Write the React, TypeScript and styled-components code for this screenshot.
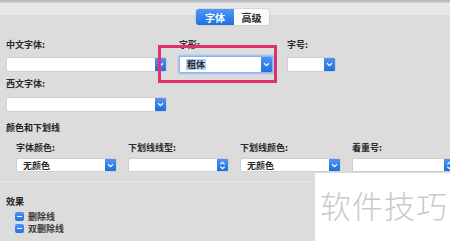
import React from "react";
import styled, { createGlobalStyle } from "styled-components";

const GlobalStyle = createGlobalStyle`
  html, body {
    margin: 0;
    padding: 0;
    background: #dcdcdc;
  }
  body {
    font-family: "Noto Sans CJK SC", "Noto Sans", sans-serif;
    color: #262626;
  }
`;

const Panel = styled.div`
  position: relative;
  width: 450px;
  height: 241px;
  overflow: hidden;
  background: #dcdcdc;
`;

const Header = styled.div`
  height: 26px;
  box-sizing: border-box;
  padding: 9px 0 0 196px;
  background: linear-gradient(
    to bottom,
    #b8b8b8 0px,
    #c4c4c4 2px,
    #e8e8e8 3px,
    #e8e8e8 15px,
    #d2d2d2 16px,
    #dcdcdc 17px
  );
`;

const Tabs = styled.div`
  display: flex;
  height: 16px;
  border-radius: 3px;
  overflow: hidden;
  box-shadow: 0 0 0 0.5px #c4c4c4;
  width: max-content;
`;

const Tab = styled.div<{ $active?: boolean }>`
  width: ${(p) => (p.$active ? 38 : 35)}px;
  height: 16px;
  display: flex;
  align-items: center;
  justify-content: center;
  font-size: 10px;
  font-weight: 700;
  color: ${(p) => (p.$active ? "#fff" : "#2a2a2a")};
  background: ${(p) =>
    p.$active ? "linear-gradient(to bottom, #4f97f4, #2170e4)" : "#fafafa"};
`;

const FontRow = styled.div`
  display: flex;
  padding: 13px 0 0 6px;
`;

const Column = styled.div<{ $left?: number }>`
  display: flex;
  flex-direction: column;
  margin-left: ${(p) => p.$left ?? 0}px;
`;

const Label = styled.div<{ $top?: number }>`
  font-size: 9px;
  line-height: 12px;
  font-weight: 700;
  color: #2a2a2a;
  margin-top: ${(p) => p.$top ?? 0}px;
  white-space: nowrap;
`;

const SelectBox = styled.div<{ $w: number; $h?: number; $top?: number; $focus?: boolean }>`
  display: flex;
  width: ${(p) => p.$w}px;
  height: ${(p) => p.$h ?? 15}px;
  margin-top: ${(p) => p.$top ?? 0}px;
  box-sizing: border-box;
  background: #fff;
  border-radius: 2px;
  border: 1px solid ${(p) => (p.$focus ? "#8db3ea" : "#cfcfcf")};
  box-shadow: ${(p) => (p.$focus ? "0 0 0 1.5px #a9c6f0" : "none")};
  overflow: hidden;
  flex-shrink: 0;
`;

const SelectValue = styled.div`
  flex: 1;
  display: flex;
  align-items: center;
  padding-left: 6px;
  font-size: 9px;
  font-weight: 700;
  color: #2a2a2a;
  white-space: nowrap;
`;

const Highlight = styled.span`
  background: #b6cff2;
  padding: 0 1px;
  line-height: 11px;
`;

const Arrow = styled.div`
  width: 11px;
  display: flex;
  align-items: center;
  justify-content: center;
  background: linear-gradient(to bottom, #4d95f3, #1f6de0);
`;

const SectionTitle = styled.div<{ $top: number }>`
  font-size: 9px;
  line-height: 12px;
  font-weight: 700;
  color: #222;
  margin: ${(p) => p.$top}px 0 0 6px;
`;

const ColorRow = styled.div`
  display: grid;
  grid-template-columns: repeat(4, 101px);
  column-gap: 11px;
  padding: 8px 0 0 16px;
`;

const Separator = styled.div`
  height: 1px;
  margin-top: 8px;
  background: #ebebeb;
  border-top: 1px solid #d2d2d2;
`;

const CheckRow = styled.div<{ $top: number }>`
  display: flex;
  align-items: center;
  gap: 4px;
  height: 11px;
  margin: ${(p) => p.$top}px 0 0 15px;
  font-size: 9px;
  font-weight: 700;
  color: #3a3a3a;
`;

const Check = styled.div`
  width: 9px;
  height: 9px;
  border-radius: 2px;
  background: linear-gradient(to bottom, #4d95f3, #2170e4);
  display: flex;
  align-items: center;
  justify-content: center;
  &::after {
    content: "";
    width: 5px;
    height: 1.5px;
    background: #fff;
  }
`;

const Annotation = styled.div`
  position: absolute;
  left: 158px;
  top: 45px;
  width: 119px;
  height: 38px;
  box-sizing: border-box;
  border: 3px solid #de3170;
`;

const Watermark = styled.div`
  position: absolute;
  left: 315px;
  top: 173px;
  right: 0;
  bottom: 0;
  background: #fff;
  display: flex;
  align-items: center;
  padding-left: 5px;
  padding-bottom: 6px;
  font-size: 31px;
  font-weight: 300;
  letter-spacing: 1px;
  color: #cacaca;
  white-space: nowrap;
`;

const Chevron = () => (
  <svg width="7" height="5" viewBox="0 0 7 5">
    <path d="M1 1.2 L3.5 3.6 L6 1.2" fill="none" stroke="#fff" strokeWidth="1.2" />
  </svg>
);

const UpDown = () => (
  <svg width="7" height="9" viewBox="0 0 7 9">
    <path d="M1.3 3.4 L3.5 1.3 L5.7 3.4 M1.3 5.6 L3.5 7.7 L5.7 5.6" fill="none" stroke="#fff" strokeWidth="1.1" />
  </svg>
);

type SelectProps = {
  w: number;
  h?: number;
  top?: number;
  value?: React.ReactNode;
  focus?: boolean;
  stepper?: boolean;
};

const Select = ({ w, h, top, value, focus, stepper }: SelectProps) => (
  <SelectBox $w={w} $h={h} $top={top} $focus={focus}>
    <SelectValue>{value}</SelectValue>
    <Arrow>{stepper ? <UpDown /> : <Chevron />}</Arrow>
  </SelectBox>
);

const colorFields = [
  { label: "字体颜色:", value: "无颜色" },
  { label: "下划线线型:", stepper: true },
  { label: "下划线颜色:", value: "无颜色" },
  { label: "着重号:", stepper: true },
];

export default function App() {
  return (
    <Panel>
      <GlobalStyle />
      <Header>
        <Tabs>
          <Tab $active>字体</Tab>
          <Tab>高级</Tab>
        </Tabs>
      </Header>

      <FontRow>
        <Column>
          <Label>中文字体:</Label>
          <Select w={161} top={6} />
          <Label $top={6}>西文字体:</Label>
          <Select w={161} top={7} />
        </Column>
        <Column $left={12}>
          <Label>字形:</Label>
          <Select w={94} top={5} h={17} focus value={<Highlight>粗体</Highlight>} />
        </Column>
        <Column $left={14}>
          <Label>字号:</Label>
          <Select w={49} top={6} />
        </Column>
      </FontRow>

      <SectionTitle $top={10}>颜色和下划线</SectionTitle>
      <ColorRow>
        {colorFields.map((f) => (
          <Column key={f.label}>
            <Label>{f.label}</Label>
            <Select w={f.label === "着重号:" ? 104 : 101} h={14} top={4} value={f.value} stepper={f.stepper} />
          </Column>
        ))}
      </ColorRow>
      <Separator />

      <SectionTitle $top={14}>效果</SectionTitle>
      <CheckRow $top={3}>
        <Check />
        删除线
      </CheckRow>
      <CheckRow $top={1}>
        <Check />
        双删除线
      </CheckRow>

      <Annotation />
      <Watermark>软件技巧</Watermark>
    </Panel>
  );
}
